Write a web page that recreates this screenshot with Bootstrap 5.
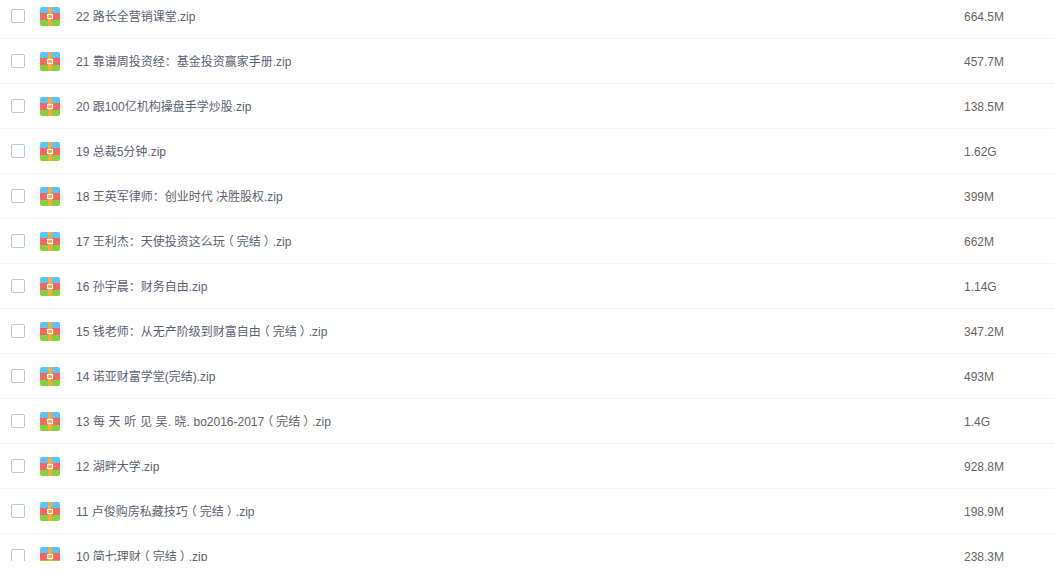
<!DOCTYPE html>
<html lang="zh">
<head>
  <meta charset="UTF-8" />
  <meta name="viewport" content="width=device-width, initial-scale=1" />
  <title>文件列表</title>
  <link href="https://cdn.jsdelivr.net/npm/bootstrap@5.3.2/dist/css/bootstrap.min.css" rel="stylesheet" />
  <style>
    body {
      background: #fff;
      color: #666;
      font: 12px/1.5 "Liberation Sans", "Noto Sans CJK SC", sans-serif;
      overflow: hidden;
    }
    .file-window { height: 561px; overflow: hidden; }
    .file-list { margin-top: -6px; }
    .file-row {
      height: 45px;
      padding: 1px 0 0 11px;
      border-bottom: 1px solid #f2f6fd;
    }
    .file-check {
      width: 14px;
      height: 14px;
      margin-bottom: 1px;
      border: 1px solid #b9c6d6;
      border-radius: 2px;
      flex: none;
    }
    .file-icon { width: 20px; height: 19px; margin: 0 16px 0 15px; flex: none; }
    .file-name { flex: 1; color: #5c6270; white-space: pre; }
    .file-size { width: 91px; flex: none; color: #666; }
    .punct-colon { font-family: "Noto Sans CJK TC", sans-serif; }
    .punct-paren { font-feature-settings: "halt"; padding: 0 3px; }
    .name-spaced { word-spacing: .3px; }
  </style>
</head>
<body>
  <div class="file-window">
    <div class="file-list d-flex flex-column" id="lista"></div>
  </div>

  <script>
    const archivos = [
      ["22 路长全营销课堂.zip", "664.5M"],
      ["21 靠谱周投资经：基金投资赢家手册.zip", "457.7M"],
      ["20 跟100亿机构操盘手学炒股.zip", "138.5M"],
      ["19 总裁5分钟.zip", "1.62G"],
      ["18 王英军律师：创业时代 决胜股权.zip", "399M"],
      ["17 王利杰：天使投资这么玩（完结）.zip", "662M"],
      ["16 孙宇晨：财务自由.zip", "1.14G"],
      ["15 钱老师：从无产阶级到财富自由（完结）.zip", "347.2M"],
      ["14 诺亚财富学堂(完结).zip", "493M"],
      ["13 每 天 听 见 吴. 晓. bo2016-2017（完结）.zip", "1.4G", "name-spaced"],
      ["12 湖畔大学.zip", "928.8M"],
      ["11 卢俊购房私藏技巧（完结）.zip", "198.9M"],
      ["10 简七理财（完结）.zip", "238.3M"]
    ];

    const icono = `<svg class="file-icon" viewBox="0 0 20 19" aria-hidden="true">
      <path d="M2 0h16a2 2 0 0 1 2 2v4H0V2a2 2 0 0 1 2-2z" fill="#5bc5fa"/>
      <rect y="6" width="20" height="7" fill="#fb6560"/>
      <path d="M0 13h20v4a2 2 0 0 1-2 2H2a2 2 0 0 1-2-2z" fill="#85d03f"/>
      <rect x="8" width="4" height="19" fill="#fbaa3a"/>
      <rect x="7.5" y="7.5" width="5" height="4" fill="#fbaa3a" stroke="#fff" stroke-width="1.2"/>
    </svg>`;

    // la captura centra los signos de puntuación de ancho completo
    function marcar(nombre) {
      return nombre
        .replace(/：/g, '<span class="punct-colon">：</span>')
        .replace(/[（）]/g, m => `<span class="punct-paren">${m}</span>`);
    }

    const lista = document.getElementById('lista');
    archivos.forEach(a => {
      const fila = document.createElement('div');
      fila.className = 'file-row d-flex align-items-center';
      fila.innerHTML = `<span class="file-check"></span>${icono}<span class="file-name ${a[2] || ''}">${marcar(a[0])}</span><span class="file-size">${a[1]}</span>`;
      lista.appendChild(fila);
    });
  </script>
  <script src="https://cdn.jsdelivr.net/npm/bootstrap@5.3.2/dist/js/bootstrap.bundle.min.js"></script>
</body>
</html>
